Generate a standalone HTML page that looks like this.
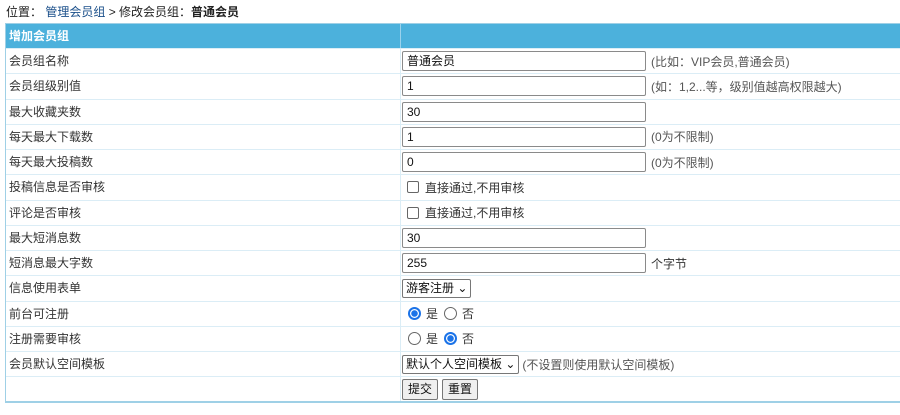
<!DOCTYPE html>
<html><head><meta charset="utf-8"><style>
*{box-sizing:border-box;margin:0;padding:0}
body{width:900px;height:415px;background:#fff;font-family:"Liberation Sans","Noto Sans CJK SC",sans-serif;font-size:12px;color:#333;position:relative;overflow:hidden}
.pos{position:absolute;left:6px;top:3px;font-size:12px;color:#222}
.pos a{color:#1a4f8a;text-decoration:none}
.tbl{position:absolute;left:5px;top:23px;width:900px;height:379px;border:1px solid #9fd0e6;border-right:none}
.hd{position:absolute;left:0;top:0;width:100%;height:24px;background:#4cb1dc;color:#fff;font-weight:bold;line-height:24px;padding-left:3px}
.hd i{position:absolute;left:394px;top:0;height:24px;border-left:1px solid #9ad2ec}
.row{position:absolute;left:0;width:100%;height:25.25px;border-top:1px solid #dbedf6}
.l{position:absolute;left:3px;top:0;line-height:24px}
.r{position:absolute;left:394px;top:0;height:100%;border-left:1px solid #dbedf6;width:600px;padding-left:1px;display:flex;align-items:center;white-space:nowrap}
.in{width:244px;height:20px;border:1px solid #8a8a8a;border-radius:2px;padding-left:4px;line-height:18px;color:#111;margin-left:0}
.note{color:#555;margin-left:5px}
.cb{width:12px;height:12px;border:1px solid #666;border-radius:2px;margin:0 6px 0 5px}
.rd{width:13px;height:13px;border:1px solid #666;border-radius:50%;margin:0 5px 0 6px;display:inline-block}
.rd.on{border:2px solid #1b73e8;background:radial-gradient(circle,#1b73e8 3px,#fff 3.5px)}
.sel{height:19px;border:1px solid #777;border-radius:2px;padding:0 3px;line-height:17px;color:#111}
.btn{height:21px;border:1px solid #777;border-radius:2px;background:#efefef;padding:0 5px;line-height:19px;margin-right:4px;color:#111}
</style></head><body>
<div class="pos">位置： <a>管理会员组</a> &gt; 修改会员组：<b>普通会员</b></div>
<div class="tbl">
<div class="hd">增加会员组<i></i></div>
<div class="row" style="top:24px"><span class="l">会员组名称</span><div class="r"><div class="in">普通会员</div><span class="note">(比如：VIP会员,普通会员)</span></div></div>
<div class="row" style="top:49.25px"><span class="l">会员组级别值</span><div class="r"><div class="in">1</div><span class="note">(如：1,2...等，级别值越高权限越大)</span></div></div>
<div class="row" style="top:74.5px"><span class="l">最大收藏夹数</span><div class="r"><div class="in">30</div></div></div>
<div class="row" style="top:99.75px"><span class="l">每天最大下载数</span><div class="r"><div class="in">1</div><span class="note">(0为不限制)</span></div></div>
<div class="row" style="top:125px"><span class="l">每天最大投稿数</span><div class="r"><div class="in">0</div><span class="note">(0为不限制)</span></div></div>
<div class="row" style="top:150.25px"><span class="l">投稿信息是否审核</span><div class="r"><span class="cb"></span>直接通过,不用审核</div></div>
<div class="row" style="top:175.5px"><span class="l">评论是否审核</span><div class="r"><span class="cb"></span>直接通过,不用审核</div></div>
<div class="row" style="top:200.75px"><span class="l">最大短消息数</span><div class="r"><div class="in">30</div></div></div>
<div class="row" style="top:226px"><span class="l">短消息最大字数</span><div class="r"><div class="in">255</div><span class="note" style="color:#333">个字节</span></div></div>
<div class="row" style="top:251.25px"><span class="l">信息使用表单</span><div class="r"><span class="sel">游客注册 ⌄</span></div></div>
<div class="row" style="top:276.5px"><span class="l">前台可注册</span><div class="r"><span class="rd on"></span>是<span class="rd"></span>否</div></div>
<div class="row" style="top:301.75px"><span class="l">注册需要审核</span><div class="r"><span class="rd"></span>是<span class="rd on"></span>否</div></div>
<div class="row" style="top:327px"><span class="l">会员默认空间模板</span><div class="r"><span class="sel">默认个人空间模板 ⌄</span><span class="note" style="margin-left:3px">(不设置则使用默认空间模板)</span></div></div>
<div class="row" style="top:352.25px;height:26px"><div class="r"><span class="btn">提交</span><span class="btn">重置</span></div></div>
</div>
<div style="position:absolute;left:5px;top:401px;width:895px;height:2px;background:#9fd0e6"></div>
</body></html>
